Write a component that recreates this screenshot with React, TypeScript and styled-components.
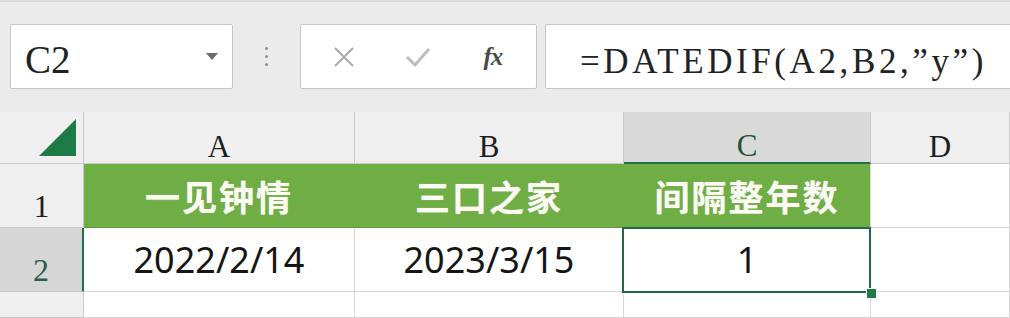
import React from "react";
import styled, { createGlobalStyle } from "styled-components";

const Global = createGlobalStyle`
  html, body { margin: 0; padding: 0; }
  body {
    width: 1010px;
    height: 318px;
    overflow: hidden;
    background: #ececec;
    font-family: "Noto Sans", "Noto Sans CJK SC", sans-serif;
  }
`;

const Page = styled.div`
  display: flex;
  flex-direction: column;
  width: 1010px;
  height: 318px;
  overflow: hidden;
`;

const Toolbar = styled.div`
  display: flex;
  align-items: stretch;
  height: 112px;
  box-sizing: border-box;
  padding: 24px 0 23px 10px;
  border-top: 2px solid #dadada;
  background: #ebebeb;
`;

const Box = styled.div`
  display: flex;
  align-items: center;
  box-sizing: border-box;
  background: #ffffff;
  border: 1px solid #c6c6c6;
  border-radius: 2px;
`;

const NameBox = styled(Box)`
  width: 223px;
  margin-top: -2px;
  padding: 6px 14px 0 14px;
  justify-content: space-between;
  font-family: "Liberation Serif", "DejaVu Serif", serif;
  font-size: 39px;
  color: #222;
`;

const Caret = styled.span`
  width: 0;
  height: 0;
  margin-top: -6px;
  border-left: 6px solid transparent;
  border-right: 6px solid transparent;
  border-top: 7px solid #6b6b6b;
`;

const Dots = styled.div`
  width: 67px;
  display: flex;
  flex-direction: column;
  align-items: center;
  justify-content: center;
  gap: 5px;
  margin-top: -2px;
`;

const Dot = styled.span`
  width: 3px;
  height: 3px;
  border-radius: 50%;
  background: #8a8a8a;
`;

const ButtonsBox = styled(Box)`
  width: 237px;
  margin-top: -2px;
  justify-content: space-around;
  padding: 0 6px;
`;

const IconSlot = styled.span`
  display: flex;
  align-items: center;
  justify-content: center;
  width: 40px;
  height: 40px;
`;

const Fx = styled.span`
  font-family: "Liberation Serif", "DejaVu Serif", serif;
  font-style: italic;
  font-weight: bold;
  font-size: 25px;
  color: #4a4a4a;
  letter-spacing: -1px;
`;

const FormulaBox = styled(Box)`
  flex: 1;
  margin: -2px -3px 0 8px;
  padding: 10px 0 0 34px;
  font-family: "Liberation Serif", "DejaVu Serif", serif;
  font-size: 35px;
  letter-spacing: 3.6px;
  color: #222;
  white-space: pre;
`;

const Sheet = styled.div`
  flex: 1;
  display: grid;
  grid-template-columns: 84px 271px 269px 247px 1fr;
  grid-template-rows: 52px 64px 64px 1fr;
  background: #ffffff;
`;

const GRID = "#d6d6d6";

const Corner = styled.div`
  background: #efefef;
  border-right: 1px solid #c8c8c8;
  border-bottom: 1px solid #c8c8c8;
  display: flex;
  align-items: flex-end;
  justify-content: flex-end;
  padding: 0 6px 6px 0;
`;

const ColHead = styled.div<{ $active?: boolean }>`
  box-sizing: border-box;
  display: flex;
  justify-content: center;
  align-items: center;
  padding-top: 18px;
  background: ${(p) => (p.$active ? "#d9d9d9" : "#efefef")};
  border-right: 1px solid #cacaca;
  border-bottom: ${(p) => (p.$active ? "2px solid #217346" : "1px solid #c8c8c8")};
  font-family: "Liberation Serif", "DejaVu Serif", serif;
  font-size: 31px;
  color: ${(p) => (p.$active ? "#24503c" : "#1e1e1e")};
  overflow: hidden;
`;

const RowHead = styled.div<{ $active?: boolean }>`
  box-sizing: border-box;
  display: flex;
  justify-content: center;
  align-items: center;
  padding-top: 22px;
  background: ${(p) => (p.$active ? "#d6d6d6" : "#efefef")};
  border-right: ${(p) => (p.$active ? "2px solid #217346" : "1px solid #c8c8c8")};
  border-bottom: 1px solid #c8c8c8;
  font-family: "Liberation Serif", "DejaVu Serif", serif;
  font-size: 32px;
  color: ${(p) => (p.$active ? "#2a5c52" : "#1e1e1e")};
`;

const Cell = styled.div<{ $green?: boolean; $last?: boolean }>`
  position: relative;
  box-sizing: border-box;
  display: flex;
  justify-content: center;
  align-items: center;
  background: ${(p) => (p.$green ? "#6fad45" : "#ffffff")};
  border-right: 1px solid ${(p) => (p.$green && !p.$last ? "#6fad45" : GRID)};
  border-bottom: 1px solid ${(p) => (p.$green ? "#5f9c3a" : GRID)};
`;

const HeadText = styled.span`
  font-family: "Noto Sans CJK SC", "Noto Sans", sans-serif;
  font-weight: 700;
  font-size: 35px;
  letter-spacing: 2px;
  color: #fbfbf4;
  text-shadow: 0 0 1px rgba(255, 255, 255, 0.6);
`;

const ValueText = styled.span`
  font-family: "Noto Sans", "Noto Sans CJK SC", sans-serif;
  font-size: 36px;
  color: #151515;
`;

const Selection = styled.div`
  position: absolute;
  z-index: 2;
  left: -2px;
  top: -1px;
  right: -1px;
  bottom: -2px;
  border: 2px solid #1f6b46;
  pointer-events: none;
`;

const Handle = styled.div`
  position: absolute;
  z-index: 3;
  right: -6px;
  bottom: -7px;
  width: 9px;
  height: 9px;
  background: #1f7a48;
  outline: 1px solid #ffffff;
`;

const Blank = styled(Cell)``;

export default function App() {
  return (
    <Page>
      <Global />
      <Toolbar>
        <NameBox>
          <span>C2</span>
          <Caret />
        </NameBox>
        <Dots>
          <Dot />
          <Dot />
          <Dot />
        </Dots>
        <ButtonsBox>
          <IconSlot>
            <svg width="22" height="22" viewBox="0 0 22 22">
              <path d="M2 2 L20 20 M20 2 L2 20" stroke="#a9a9a9" strokeWidth="2" fill="none" />
            </svg>
          </IconSlot>
          <IconSlot>
            <svg width="26" height="22" viewBox="0 0 26 22">
              <path d="M2 11 L10 19 L24 3" stroke="#bdbdbd" strokeWidth="3" fill="none" strokeLinejoin="round" />
            </svg>
          </IconSlot>
          <IconSlot>
            <Fx>fx</Fx>
          </IconSlot>
        </ButtonsBox>
        <FormulaBox>=DATEDIF(A2,B2,”y”)</FormulaBox>
      </Toolbar>
      <Sheet>
        <Corner>
          <svg width="38" height="38" viewBox="0 0 38 38">
            <polygon points="0,37 37,37 37,0" fill="#1f7a48" />
          </svg>
        </Corner>
        <ColHead>A</ColHead>
        <ColHead>B</ColHead>
        <ColHead $active>C</ColHead>
        <ColHead>D</ColHead>

        <RowHead>1</RowHead>
        <Cell $green>
          <HeadText>一见钟情</HeadText>
        </Cell>
        <Cell $green>
          <HeadText>三口之家</HeadText>
        </Cell>
        <Cell $green $last>
          <HeadText>间隔整年数</HeadText>
        </Cell>
        <Blank />

        <RowHead $active>2</RowHead>
        <Cell>
          <ValueText>2022/2/14</ValueText>
        </Cell>
        <Cell>
          <ValueText>2023/3/15</ValueText>
        </Cell>
        <Cell>
          <ValueText>1</ValueText>
          <Selection />
          <Handle />
        </Cell>
        <Blank />

        <RowHead />
        <Blank />
        <Blank />
        <Blank />
        <Blank />
      </Sheet>
    </Page>
  );
}
